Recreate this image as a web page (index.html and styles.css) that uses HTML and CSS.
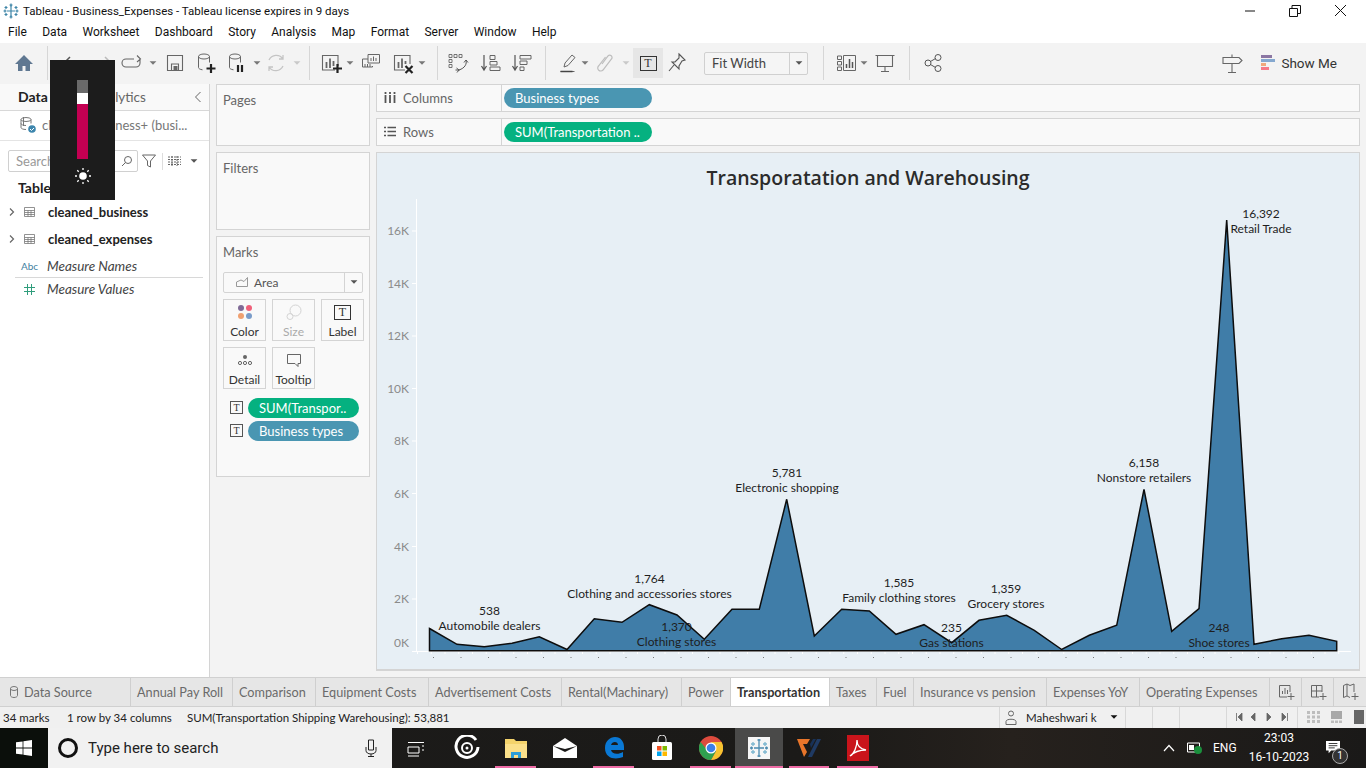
FILE: index.html
```html
<!DOCTYPE html>
<html lang="en">
<head>
<meta charset="utf-8">
<title>Tableau - Business_Expenses</title>
<link rel="stylesheet" href="styles.css">
</head>
<body>
<div class="app">
  <header class="titlebar">
    <svg class="applogo" width="16" height="16" viewBox="0 0 16 16"><g stroke="#3f86a8" stroke-width="1.2"><path d="M8 2v12M4 8h8"/><path d="M8 .5v3M6.500 2h3M8 12.500v3M6.500 14h3M.5 8h3M2 6.500v3M12.500 8h3M14 6.500v3M3 3v3M1.500 4.500h3M13 3v3M11.500 4.500h3M3 10v3M1.500 11.500h3M13 10v3M11.500 11.500h3"/></g></svg>
    <span class="apptitle">Tableau - Business_Expenses - Tableau license expires in 9 days</span>
    <div class="winctl">
      <svg width="12" height="12" viewBox="0 0 12 12"><path d="M1 6h10" stroke="#111" fill="none"/></svg>
      <svg width="12" height="12" viewBox="0 0 12 12"><path d="M.5 3.500h8v8h-8zM3 3.500V.5h8.500v8H8.500" stroke="#111" fill="none"/></svg>
      <svg width="13" height="13" viewBox="0 0 13 13"><path d="M1 1l11 11M12 1L1 12" stroke="#111" fill="none"/></svg>
    </div>
  </header>
  <nav class="menubar">
    <span>File</span><span>Data</span><span>Worksheet</span><span>Dashboard</span><span>Story</span><span>Analysis</span><span>Map</span><span>Format</span><span>Server</span><span>Window</span><span>Help</span>
  </nav>
  <div class="toolbar">
    <svg class="ic ml12" viewBox="0 0 24 24"><path d="M12 4L3 13h3v7h4.500v-5h3v5H18v-7h3z" fill="#5f7791"/></svg>
    <i class="sep ml11"></i>
    <svg class="ic ml11" viewBox="0 0 24 24"><path d="M21 12H5M11 6l-6 6 6 6" fill="none" stroke="#555" stroke-width="1.500"/></svg>
    <svg class="ic ml9" viewBox="0 0 24 24"><path d="M3 12h16M13 6l6 6-6 6" fill="none" stroke="#bbb" stroke-width="1.500"/></svg>
    <svg class="ic ml4" viewBox="0 0 24 24"><path d="M14 8H6a4 4 0 0 0 0 8h10a4 4 0 0 0 4-4V9M17 4.500l3.500 3.500-3.500 3" fill="none" stroke="#666" stroke-width="1.100"/></svg>
    <i class="caret ml5"></i>
    <svg class="ic ml6" viewBox="0 0 24 24"><path d="M4.500 4.500h15v15h-15zM8.500 19v-6h7v6" fill="none" stroke="#666" stroke-width="1.100"/><path d="M10.500 15h4v4h-4z" fill="#666"/></svg>
    <svg class="ic ml7" viewBox="0 0 24 24"><ellipse cx="10" cy="5.500" rx="5.500" ry="2.500" fill="none" stroke="#666"/><path d="M4.500 5.500v11c0 1 1.500 2 4 2.300M15.500 5.500v6" fill="none" stroke="#666"/><path d="M17 13v9M12.500 17.500h9" stroke="#222" stroke-width="2.200"/></svg>
    <svg class="ic ml7" viewBox="0 0 24 24"><ellipse cx="10" cy="5.500" rx="5.500" ry="2.500" fill="none" stroke="#666"/><path d="M4.500 5.500v11c0 1 1.500 2 4 2.300M15.500 5.500v6" fill="none" stroke="#666"/><path d="M13 14v7M17 14v7" stroke="#222" stroke-width="2.200"/></svg>
    <i class="caret ml4"></i>
    <svg class="ic ml3" viewBox="0 0 24 24"><path d="M5 9a8 8 0 0 1 14-1M19 15a8 8 0 0 1-14 1M19 4v4h-4M5 20v-4h4" fill="none" stroke="#c4c4c4" stroke-width="1.300"/></svg>
    <i class="caret off ml5"></i>
    <i class="sep ml8"></i>
    <svg class="ic ml9" viewBox="0 0 24 24"><path d="M16 19H3.500V4.500H19V15" fill="none" stroke="#666" stroke-width="1.100"/><path d="M7.500 11v6M11 7.500V17M14.500 10v5" stroke="#666" stroke-width="1.800"/><path d="M18.500 13v9M14 17.500h9" stroke="#222" stroke-width="2.200"/></svg>
    <i class="caret ml3"></i>
    <svg class="ic ml5" viewBox="0 0 24 24"><path d="M9 8H3.500v8h10v-1M9 3.500h11.500V12H9zM12 10V7M14.500 10V5.500M17 10V7M6 16v-3M8.500 16v-3M11 16v-3" fill="none" stroke="#666"/></svg>
    <svg class="ic ml8" viewBox="0 0 24 24"><path d="M14 19H3.500V4.500H19V13" fill="none" stroke="#666" stroke-width="1.100"/><path d="M7.500 11v6M11 7.500V17M14.500 10v3" stroke="#666" stroke-width="1.800"/><path d="M14.500 15l7 7M21.500 15l-7 7" stroke="#222" stroke-width="2.200"/></svg>
    <i class="caret ml3"></i>
    <i class="sep ml11"></i>
    <svg class="ic ml8" viewBox="0 0 24 24"><path d="M3 3.500h3v3H3zM8 3.500h3v3H8zM13 3.500h3v3h-3zM3 8.500h3v3H3zM3 13.500h3v3H3z" fill="none" stroke="#666" stroke-width=".9"/><path d="M20 9c1 4-1 8-7 10M9.500 19h4M20 9l-2 2.500M20 9l2 2.500M13 19l-2.500-2M13 19l-2 2.500" fill="none" stroke="#555"/></svg>
    <svg class="ic ml9" viewBox="0 0 24 24"><path d="M5 4v14M2.500 15L5 19l2.500-4" fill="none" stroke="#555" stroke-width="1.200"/><path d="M11 4.500h5v4h-5zM11 10.500h7v3.500h-7zM11 16h10v3.500H11z" fill="none" stroke="#666"/></svg>
    <svg class="ic ml7" viewBox="0 0 24 24"><path d="M5 4v14M2.500 15L5 19l2.500-4" fill="none" stroke="#555" stroke-width="1.200"/><path d="M10 4.500h11v3.500H10zM10 10h7v3.500h-7zM10 16h4v3.500h-4z" fill="none" stroke="#666"/></svg>
    <i class="sep ml11"></i>
    <svg class="ic ml10" viewBox="0 0 24 24"><path d="M8 16l1-4 7-8 3 2.500-7 8zM4.500 20.500h14" fill="none" stroke="#666"/><path d="M4.500 20.500h12" stroke="#444" stroke-width="1.500"/></svg>
    <i class="caret ml1"></i>
    <svg class="ic ml4" viewBox="0 0 24 24"><path d="M9 13l6-8a2.300 2.300 0 0 1 3.500 3L10 19a3 3 0 0 1-4.500-4l7-9" fill="none" stroke="#bdbdbd" stroke-width="1.200"/></svg>
    <i class="caret off ml5"></i>
    <span class="tbtn ml3"><span class="tbox big">T</span></span>
    <svg class="ic ml2" viewBox="0 0 24 24"><path d="M14 3l6 6-3 1-3 5 0 3-7-7 3 0 4-4zM9 14l-5 6" fill="none" stroke="#555" stroke-width="1.100"/></svg>
    <div class="fit"><span class="fit-text">Fit Width</span><span class="fit-arrow"><i class="caret dk"></i></span></div>
    <i class="sep ml15"></i>
    <svg class="ic ml11" viewBox="0 0 24 24"><path d="M2.500 5h4v3.500h-4zM2.500 10.500h4V14h-4zM2.500 16h4v3.500h-4zM8.500 4.500h12v15h-12z" fill="none" stroke="#666"/><path d="M11.500 17v-4M14.500 17V8M17.500 17v-6" stroke="#555" stroke-width="1.500"/></svg>
    <i class="caret ml1"></i>
    <svg class="ic ml5" viewBox="0 0 24 24"><path d="M2.500 4.500h19M4.500 4.500v11h15v-11M12 15.500v5M8 20.500h8" fill="none" stroke="#666" stroke-width="1.100"/></svg>
    <i class="sep ml12"></i>
    <svg class="ic ml11" viewBox="0 0 24 24"><circle cx="7" cy="12" r="3" fill="none" stroke="#555"/><circle cx="17" cy="6.500" r="3" fill="none" stroke="#555"/><circle cx="17" cy="17.500" r="3" fill="none" stroke="#555"/><path d="M9.500 10.500l5-3M9.500 13.500l5 3" stroke="#555"/></svg>
    <div class="tb-right">
      <svg class="ic" viewBox="0 0 24 24"><path d="M3 6.500h16l3 3-3 3H3zM12 3.500v3M12 12.500v9M8 21.500h8" fill="none" stroke="#666" stroke-width="1.100"/></svg>
      <div class="showme">
        <svg width="14" height="16" viewBox="0 0 14 16"><path d="M0 0h11v3H0z" fill="#8b76a3"/><path d="M0 4h14v3H0z" fill="#85a8cf"/><path d="M0 8h5v3H0z" fill="#f0a97c"/><path d="M0 12h8v3H0z" fill="#f67a88"/></svg>
        <span>Show Me</span>
      </div>
    </div>
  </div>

  <div class="main">
    <aside class="datapane">
      <div class="dp-head"><span class="dp-data">Data</span><span class="dp-an">Analytics</span><svg class="dp-chev" width="8" height="12" viewBox="0 0 8 12"><path d="M6.500 1L1.500 6l5 5" fill="none" stroke="#666"/></svg></div>
      <div class="dp-source">
        <svg width="18" height="18" viewBox="0 0 18 18"><ellipse cx="7" cy="3.500" rx="5" ry="2" fill="none" stroke="#777"/><path d="M2 3.500v8c0 1 2 2 5 2M12 3.500v4M2 7.500c0 1 2 2 5 2M4.500 1v9" fill="none" stroke="#777"/><circle cx="13" cy="13" r="3.800" fill="#3d86ad"/><path d="M11 13l1.500 1.500 2.500-2.500" stroke="#fff" fill="none"/></svg>
        <span>cleaned_business+ (busi...</span>
      </div>
      <div class="dp-search">
        <div class="searchbox"><span>Search</span><svg width="12" height="12" viewBox="0 0 12 12"><circle cx="7" cy="5" r="3.500" fill="none" stroke="#666"/><path d="M4.500 7.500L1 11" stroke="#666"/></svg></div>
        <svg class="dp-funnel" width="14" height="14" viewBox="0 0 14 14"><path d="M.5 1h13L8.500 7v6l-3-1.500V7z" fill="none" stroke="#666"/></svg>
        <i class="vline"></i>
        <svg width="13" height="10" viewBox="0 0 13 10"><path d="M0 1h13M0 3.500h13M0 6h13M0 8.500h13M4 0v10M9 0v10" stroke="#666" fill="none" stroke-dasharray="2 1"/></svg>
        <i class="caret dk ml9"></i>
      </div>
      <div class="dp-tables">Tables</div>
      <div class="field tbl"><svg class="chev" width="6" height="8" viewBox="0 0 6 8"><path d="M1 .5L4.500 4 1 7.500" fill="none" stroke="#666" stroke-width="1.200"/></svg><svg width="11" height="10" viewBox="0 0 11 10"><path d="M.5.500h10v9H.5zM.5 3.500h10M.5 5.500h10M.5 7.500h10M4 3.500v6M7 3.500v6" fill="none" stroke="#777" stroke-width=".8"/></svg><b>cleaned_business</b></div>
      <div class="field tbl gap2"><svg class="chev" width="6" height="8" viewBox="0 0 6 8"><path d="M1 .5L4.500 4 1 7.500" fill="none" stroke="#666" stroke-width="1.200"/></svg><svg width="11" height="10" viewBox="0 0 11 10"><path d="M.5.500h10v9H.5zM.5 3.500h10M.5 5.500h10M.5 7.500h10M4 3.500v6M7 3.500v6" fill="none" stroke="#777" stroke-width=".8"/></svg><b>cleaned_expenses</b></div>
      <div class="field mn"><span class="abc">Abc</span><em>Measure Names</em></div>
      <div class="field mv"><svg width="11" height="11" viewBox="0 0 11 11"><path d="M3.500 0v11M7.500 0v11M0 3.500h11M0 7.500h11" stroke="#2f9d7c" fill="none"/></svg><em>Measure Values</em></div>
    </aside>

    <section class="cards">
      <div class="card pages"><h3>Pages</h3></div>
      <div class="card filters"><h3>Filters</h3></div>
      <div class="card marks">
        <h3>Marks</h3>
        <div class="markselect"><svg width="12" height="10" viewBox="0 0 12 10"><path d="M.5 9.500V5L5 3l3 1.500 3.500-4v9z" fill="none" stroke="#999"/></svg><span>Area</span><span class="ms-arrow"><i class="caret dk"></i></span></div>
        <div class="markgrid">
          <div class="mbtn"><svg width="16" height="16" viewBox="0 0 16 16"><circle cx="4" cy="4" r="3" fill="#7f6a96"/><circle cx="12" cy="4" r="3" fill="#f0607a"/><circle cx="4" cy="12" r="3" fill="#f0a070"/><circle cx="12" cy="12" r="3" fill="#7a9cc9"/></svg><span>Color</span></div>
          <div class="mbtn off"><svg width="16" height="16" viewBox="0 0 16 16"><circle cx="9.500" cy="6.500" r="5.500" fill="none" stroke="#d3d3d3"/><circle cx="4" cy="12.500" r="3" fill="none" stroke="#d3d3d3"/></svg><span>Size</span></div>
          <div class="mbtn"><span class="tbox big">T</span><span>Label</span></div>
          <div class="mbtn"><svg width="16" height="16" viewBox="0 0 16 16"><circle cx="8" cy="5" r="2" fill="#666"/><circle cx="3" cy="11" r="1.600" fill="none" stroke="#666"/><circle cx="8" cy="11" r="1.600" fill="none" stroke="#666"/><circle cx="13" cy="11" r="1.600" fill="none" stroke="#666"/></svg><span>Detail</span></div>
          <div class="mbtn"><svg width="16" height="16" viewBox="0 0 16 16"><path d="M1.500 2.500h13v9h-2.500v3l-3-3h-7.500z" fill="none" stroke="#666"/></svg><span>Tooltip</span></div>
        </div>
        <div class="markpill"><span class="tbox">T</span><span class="pill green">SUM(Transpor..</span></div>
        <div class="markpill"><span class="tbox">T</span><span class="pill blue">Business types</span></div>
      </div>
    </section>

    <section class="sheet">
      <div class="shelf">
        <div class="shelf-label"><svg width="12" height="11" viewBox="0 0 12 11"><path d="M1.500 3v8M6 3v8M10.500 3v8M1.500 0v2M6 0v2M10.500 0v2" stroke="#555" stroke-width="1.800"/></svg><span>Columns</span></div>
        <div class="shelf-body"><span class="pill blue wide">Business types</span></div>
      </div>
      <div class="shelf">
        <div class="shelf-label"><svg width="12" height="11" viewBox="0 0 12 11"><path d="M0 1.500h2M3.500 1.500H12M0 5.500h2M3.500 5.500H12M0 9.500h2M3.500 9.500H12" stroke="#555" stroke-width="1.600"/></svg><span>Rows</span></div>
        <div class="shelf-body"><span class="pill green wide">SUM(Transportation ..</span></div>
      </div>
      <div class="view">
        <h1 class="viewtitle">Transporatation and Warehousing</h1>
        <svg class="chart" viewBox="377 198 982 472" width="982" height="472">
          <g class="axis">
            <path d="M416.500 199V651M412 231h4M412 283.500h4M412 336h4M412 388.500h4M412 441h4M412 493.500h4M412 546.500h4M412 599h4M412 651.500h939"/>
            <path class="minor" d="M417 652.500H1351"/>
            <path class="dots" d="M433 657.500H1340"/>
          </g>
          <g class="ylabels">
            <text x="409" y="235">16K</text><text x="409" y="288">14K</text><text x="409" y="340">12K</text><text x="409" y="393">10K</text><text x="409" y="445">8K</text><text x="409" y="498">6K</text><text x="409" y="551">4K</text><text x="409" y="603">2K</text><text x="409" y="647">0K</text>
          </g>
          <path class="area" d="M429.500 628.500L457 644.300 484.300 646.700 512 643.300 539.300 636.700 567 649.500 594.300 618.700 622 622.300 649.300 604.700 677 615 704.300 639.300 732 609.300 759.300 609.300 786.700 499.300 814.300 636 841.700 609.300 869.300 611 896 634.300 924 624.700 951.700 642.700 979 620.300 1006.700 615.300 1034.300 630.300 1061.700 649.500 1089.300 635.300 1116.700 625.300 1144 489.300 1171.700 631.300 1199 608.700 1226.700 220 1254 644.300 1281.700 638.700 1309 635.300 1336.700 641.300V650.700H429.500Z"/>
          <g class="labels">
            <text x="489.500" y="615">538</text><text x="489.500" y="630">Automobile dealers</text>
            <text x="649.500" y="583">1,764</text><text x="649.500" y="598">Clothing and accessories stores</text>
            <text x="676.500" y="631">1,370</text><text x="676.500" y="646">Clothing stores</text>
            <text x="787" y="477">5,781</text><text x="787" y="492">Electronic shopping</text>
            <text x="899" y="587">1,585</text><text x="899" y="602">Family clothing stores</text>
            <text x="951.500" y="632">235</text><text x="951.500" y="647">Gas stations</text>
            <text x="1006" y="593">1,359</text><text x="1006" y="608">Grocery stores</text>
            <text x="1144" y="467">6,158</text><text x="1144" y="482">Nonstore retailers</text>
            <text x="1219" y="632">248</text><text x="1219" y="647">Shoe stores</text>
            <text x="1261" y="218">16,392</text><text x="1261" y="233">Retail Trade</text>
          </g>
        </svg>
      </div>
    </section>
  </div>

  <div class="tabs">
    <div class="tab t-ds"><svg width="8" height="12" viewBox="0 0 8 12"><ellipse cx="4" cy="2.500" rx="3.500" ry="2" fill="none" stroke="#777"/><path d="M.5 2.500v7c0 1 1.500 2 3.500 2s3.500-1 3.500-2v-7" fill="none" stroke="#777"/></svg>Data Source</div>
    <div class="tab t-a">Annual Pay Roll</div>
    <div class="tab t-b">Comparison</div>
    <div class="tab t-c">Equipment Costs</div>
    <div class="tab t-d">Advertisement Costs</div>
    <div class="tab t-e">Rental(Machinary)</div>
    <div class="tab t-f">Power</div>
    <div class="tab t-g active">Transportation</div>
    <div class="tab t-h">Taxes</div>
    <div class="tab t-i">Fuel</div>
    <div class="tab t-j">Insurance vs pension</div>
    <div class="tab t-k">Expenses YoY</div>
    <div class="tab t-l">Operating Expenses</div>
    <div class="tab t-add"><svg width="18" height="18" viewBox="0 0 18 18"><path d="M10 14H2.500V2.500H13V9M5.500 11V8M8 11V5M10.500 11V7M14 10v7M10.500 13.500h7" fill="none" stroke="#666"/></svg></div>
    <div class="tab t-add"><svg width="18" height="18" viewBox="0 0 18 18"><path d="M10 14H2.500V2.500H13V9M2.500 8H13M7.500 2.500V14M14 10v7M10.500 13.500h7" fill="none" stroke="#666"/></svg></div>
    <div class="tab t-add last"><svg width="18" height="18" viewBox="0 0 18 18"><path d="M9 14.500l-3-1.500-3.500 1.500v-12L6 1l3 1.500 4-1.500v8M6 1v12M14 10v7M10.500 13.500h7" fill="none" stroke="#666"/></svg></div>
  </div>
  <div class="status">
    <span class="st-a">34 marks</span><span class="st-b">1 row by 34 columns</span><span class="st-c">SUM(Transportation Shipping Warehousing): 53,881</span>
    <div class="st-user"><svg width="12" height="15" viewBox="0 0 12 15"><circle cx="6" cy="3.500" r="2.500" fill="none" stroke="#666"/><path d="M1 14.500v-3c0-3 10-3 10 0v3z" fill="none" stroke="#666"/></svg><span>Maheshwari k</span><i class="caret blk"></i></div>
    <div class="st-cell"></div><div class="st-cell"></div>
    <div class="st-cell w47"></div>
    <div class="st-nav">
      <svg width="60" height="10" viewBox="0 0 60 10"><path d="M1.500 1v8M7 1L3 5l4 4zM20 1l-4 4 4 4zM32 1l4 4-4 4zM47 1l4 4-4 4zM52.500 1v8" fill="#666" stroke="#666" stroke-width=".8"/></svg>
    </div>
    <div class="st-views">
      <svg width="14" height="14" viewBox="0 0 14 14"><path d="M0 1h3v3H0zM5 1h3v3H5zM10 1h3v3h-3zM0 5.500h3v3H0zM5 5.500h3v3H5zM10 5.500h3v3h-3zM0 10h3v3H0zM5 10h3v3H5zM10 10h3v3h-3z" fill="#bdbdbd"/></svg>
      <svg width="14" height="14" viewBox="0 0 14 14"><path d="M1 1h11v8H1z" fill="#a8a8a8"/><path d="M1 10.500h3v2.500H1zM5 10.500h3v2.500H5zM9 10.500h3v2.500H9z" fill="#bdbdbd"/></svg>
      <svg width="12" height="14" viewBox="0 0 12 14"><path d="M1 0h10v14H1z" fill="#666"/></svg>
    </div>
  </div>
  <footer class="taskbar">
    <div class="start"><svg width="16" height="16" viewBox="0 0 16 16"><path d="M0 2.300L6.600 1.400V7.600H0zM7.400 1.300L16 0V7.600H7.400zM0 8.400H6.600V14.600L0 13.700zM7.400 8.400H16V16L7.400 14.700z" fill="#fff"/></svg></div>
    <div class="tsearch"><i class="cortana"></i><span>Type here to search</span><svg class="tmic" width="12" height="18" viewBox="0 0 12 18"><path d="M3.500 1h5v10h-5zM1 8v3.500c0 2 2 3.500 5 3.500s5-1.500 5-3.500V8M6 15v2.500M3 17.500h6" fill="none" stroke="#222"/></svg></div>
    <div class="tasks">
      <div class="task t1"><svg width="18" height="18" viewBox="0 0 18 18"><path d="M1 3.500h16M1 8h11v6H1zM1 17h11M15 7h2M15 11h2" fill="none" stroke="#fff"/></svg></div>
      <div class="task t2"><svg width="26" height="26" viewBox="0 0 26 26"><path d="M22 5a11 11 0 1 0 2 7" fill="none" stroke="#fff" stroke-width="3"/><circle cx="13" cy="13" r="5" fill="none" stroke="#fff" stroke-width="2"/><circle cx="13" cy="13" r="1.500" fill="#fff"/></svg></div>
      <div class="task t3 mark"><svg width="24" height="22" viewBox="0 0 24 22"><path d="M1 2h9l2 2h11v17H1z" fill="#f4d36b"/><path d="M1 7h22v14H1z" fill="#fbe08a"/><path d="M7 21v-6h10v6h-3v-3h-4v3z" fill="#2d9fd9"/></svg></div>
      <div class="task t4"><svg width="24" height="20" viewBox="0 0 24 20"><path d="M0 8L12 0l12 8v12H0z" fill="#fff"/><path d="M0 8l12 6 12-6-12 3z" fill="#1b1a19"/></svg></div>
      <div class="task t5 mark"><svg width="22" height="24" viewBox="0 0 22 24"><path d="M2 12C2 5 7 1 12 1c6 0 9 5 9 10v3H8c.5 4 7 5 12 2v5c-7 3-18 2-18-9zM8 9h7c0-4-6-4-7 0z" fill="#0a78d4"/></svg></div>
      <div class="task t6"><svg width="22" height="26" viewBox="0 0 22 26"><path d="M7 8V4a4 4 0 0 1 8 0v4" fill="none" stroke="#ddd"/><rect x="1" y="7" width="20" height="18" rx="1.500" fill="#fff"/><path d="M6 11h4.500v4.500H6z" fill="#f25022"/><path d="M11.500 11H16v4.500h-4.500z" fill="#7fba00"/><path d="M6 16.500h4.500V21H6z" fill="#00a4ef"/><path d="M11.500 16.500H16V21h-4.500z" fill="#ffb900"/></svg></div>
      <div class="task t7 mark"><svg width="24" height="24" viewBox="0 0 24 24"><circle cx="12" cy="12" r="12" fill="#dd4b3e"/><path d="M12 6h10.500A12 12 0 0 1 12 24l5-9z" fill="#f6c230"/><path d="M1.600 6A12 12 0 0 0 12 24l5-9-5 0-5.500-3z" fill="#2fa04f"/><circle cx="12" cy="12" r="5.500" fill="#fff"/><circle cx="12" cy="12" r="4.300" fill="#3c7fe8"/></svg></div>
      <div class="task t8 mark sel"><span class="tabapp"><svg width="20" height="20" viewBox="0 0 20 20"><g stroke="#4b8bb0" stroke-width="1.300"><path d="M10 3v14M5 10h10M10 1v3M8.500 2h3M10 16v3M8.500 18h3M1 10h3M2.500 8.500v3M16 10h3M17.500 8.500v3"/><path d="M4 4v4M2 6h4M16 4v4M14 6h4M4 12v4M2 14h4M16 12v4M14 14h4" stroke="#7cb6cf"/></g></svg></span></div>
      <div class="task t9 mark"><svg width="24" height="22" viewBox="0 0 24 22"><path d="M0 2h13l-3 5H6l4 8-3 5z" fill="#e8752a"/><path d="M11 20L20 2h4l-9 18z" fill="#1f3a63"/><path d="M13 7l3-5h3l-5 9z" fill="#183157"/></svg></div>
      <div class="task t10 mark"><svg width="22" height="26" viewBox="0 0 22 26"><rect width="22" height="26" fill="#c9141b"/><path d="M3 21c4-2 7-9 7-16 0 5 3 9 9 10-6 0-11 1-16 6z" fill="none" stroke="#fff" stroke-width="1.300"/></svg></div>
    </div>
    <div class="tray">
      <svg class="tr-up" width="12" height="8" viewBox="0 0 12 8"><path d="M1 7l5-5.500L11 7" fill="none" stroke="#fff" stroke-width="1.200"/></svg>
      <svg class="tr-bat" width="16" height="14" viewBox="0 0 16 14"><path d="M.5 2h12v9H.5z" fill="none" stroke="#fff"/><path d="M2 4h5v5H2z" fill="#fff"/><circle cx="11" cy="9" r="4" fill="#1a8f3c"/></svg>
      <span class="tr-lang">ENG</span>
      <div class="tr-clock"><span>23:03</span><span>16-10-2023</span></div>
      <div class="tr-note"><svg width="16" height="14" viewBox="0 0 18 16"><path d="M1 1h16v11H7l-3 3v-3H1z" fill="#fff"/><path d="M4 4h10M4 6.500h10M4 9h7" stroke="#222"/></svg><span class="badge">1</span></div>
    </div>
  </footer>

  <div class="osd">
    <div class="osd-bar"><i class="o1"></i><i class="o2"></i><i class="o3"></i></div>
    <svg width="16" height="16" viewBox="0 0 16 16"><circle cx="8" cy="8" r="3.800" fill="#fff"/><path d="M8 0v2M8 14v2M0 8h2M14 8h2M2.300 2.300l1.400 1.400M12.300 12.300l1.400 1.400M2.300 13.700l1.400-1.400M12.300 3.700l1.400-1.400" stroke="#fff" stroke-width="1.300"/></svg>
  </div>
</div>
</body>
</html>
```

FILE: styles.css
```css
* { box-sizing: border-box; }
html, body { margin: 0; padding: 0; }
body { width: 1366px; height: 768px; overflow: hidden; font-family: "Lato", "Open Sans", sans-serif; font-size: 13px; color: #333; background: #fff; }
.app { position: relative; width: 1366px; height: 768px; display: flex; flex-direction: column; }
h1, h3 { margin: 0; font-weight: normal; }
i { display: block; font-style: normal; }
svg { display: block; flex: none; }

.titlebar { height: 22px; display: flex; align-items: center; padding-left: 3px; font-family: "Roboto", sans-serif; font-size: 11.500px; color: #111; }
.applogo { margin-right: 4px; }
.winctl { margin-left: auto; display: flex; align-items: center; gap: 33px; padding-right: 19px; }

.menubar { height: 21px; display: flex; align-items: center; padding-left: 8px; gap: 15.400px; font-family: "Roboto", sans-serif; font-size: 12px; color: #111; }

.toolbar { height: 41px; background: #f3f3f3; display: flex; align-items: center; }
.ic { width: 24px; height: 24px; flex: none; }
.sep { width: 1px; height: 34px; background: #d6d6d6; flex: none; }
.caret { width: 0; height: 0; border-left: 4px solid transparent; border-right: 4px solid transparent; border-top: 4px solid #777; transform: scale(.85); flex: none; }
.caret.off { border-top-color: #c9c9c9; }
.caret.dk { border-top-color: #555; }
.caret.blk { border-top-color: #111; }
.ml1 { margin-left: 1px; } .ml2 { margin-left: 2px; } .ml3 { margin-left: 3px; } .ml4 { margin-left: 4px; }
.ml5 { margin-left: 5px; } .ml6 { margin-left: 6px; } .ml7 { margin-left: 7px; } .ml8 { margin-left: 8px; }
.ml9 { margin-left: 9px; } .ml10 { margin-left: 10px; } .ml11 { margin-left: 11px; } .ml12 { margin-left: 12px; } .ml15 { margin-left: 15px; }
.tbtn { width: 30px; height: 30px; background: #e6e6e6; display: flex; align-items: center; justify-content: center; flex: none; }
.tbox { width: 13px; height: 13px; border: 1px solid #555; font-family: "Liberation Serif", serif; font-size: 10px; line-height: 11px; text-align: center; color: #333; display: block; flex: none; }
.tbox.big { width: 17px; height: 15px; font-size: 12px; line-height: 13px; border-color: #333; }
.fit { margin-left: 15px; width: 104px; height: 23px; border: 1px solid #d0d0d0; border-radius: 2px; display: flex; align-items: center; background: #f5f5f5; font-size: 13px; color: #444; flex: none; }
.fit-text { flex: 1; padding-left: 7px; }
.fit-arrow { width: 18px; height: 21px; border-left: 1px solid #d0d0d0; display: flex; align-items: center; justify-content: center; }
.tb-right { margin-left: auto; display: flex; align-items: center; padding-right: 29px; gap: 17px; }
.showme { display: flex; align-items: center; gap: 6px; font-family: "Roboto", sans-serif; font-size: 13.500px; color: #333; }

.main { height: 594px; background: #f3f3f3; display: flex; }
.datapane { width: 210px; flex: none; background: #fff; border-right: 1px solid #d4d4d4; display: flex; flex-direction: column; }
.dp-head { height: 27px; border-bottom: 1px solid #d8d8d8; display: flex; align-items: center; padding-left: 18px; background: #f9f9f9; position: relative; }
.dp-data { font-weight: 700; font-size: 14px; color: #222; }
.dp-an { margin-left: 44px; font-size: 13.500px; color: #666; }
.dp-chev { margin-left: auto; margin-right: 7px; }
.dp-source { height: 30px; border-bottom: 1px solid #e4e4e4; display: flex; align-items: center; padding-left: 19px; gap: 5px; color: #777; font-size: 13px; }
.dp-search { display: flex; align-items: center; margin-top: 10px; padding-left: 8px; height: 21px; }
.searchbox { width: 130px; height: 22px; border: 1px solid #d0d0d0; border-radius: 2px; display: flex; align-items: center; justify-content: space-between; padding: 0 4px 0 7px; color: #999; font-size: 13px; }
.dp-funnel { margin-left: 4px; }
.vline { width: 1px; height: 17px; background: #ddd; margin: 0 5px 0 6px; }
.dp-tables { margin: 6px 0 0 18px; font-weight: 700; font-size: 14px; color: #222; height: 20px; line-height: 20px; }
.field { display: flex; align-items: center; height: 22px; }
.field.tbl { margin-top: 3px; padding-left: 9px; }
.field.tbl.gap2 { margin-top: 5px; }
.field .chev { margin-right: 9px; }
.field b { margin-left: 13px; font-size: 13px; color: #222; }
.field em { font-size: 13.500px; color: #444; }
.field.mn { margin: 6px 6px 0 15px; height: 22px; border-bottom: 1px solid #d8d8d8; }
.abc { font-size: 10px; color: #3f7f9f; width: 32px; padding-left: 6px; }
.field.mv { margin-left: 15px; height: 23px; }
.field.mv svg { margin: 0 12px 0 9px; }

.cards { width: 154px; flex: none; margin-left: 6px; display: flex; flex-direction: column; gap: 6px; }
.card { background: #f9f9f9; border: 1px solid #d4d4d4; padding: 0 6px; }
.card h3 { font-size: 13px; color: #666; margin-top: 7px; line-height: 16px; }
.pages { height: 62px; }
.filters { height: 78px; }
.marks { height: 241px; }
.markselect { margin-top: 12px; height: 21px; border: 1px solid #d4d4d4; border-radius: 2px; display: flex; align-items: center; background: #f9f9f9; padding-left: 12px; gap: 6px; font-size: 12px; color: #555; position: relative; }
.ms-arrow { margin-left: auto; width: 18px; height: 19px; border-left: 1px solid #d4d4d4; display: flex; align-items: center; justify-content: center; }
.markgrid { display: grid; grid-template-columns: 43px 43px 43px; column-gap: 6px; row-gap: 6px; margin-top: 6px; }
.mbtn { height: 42px; border: 1px solid #d4d4d4; display: flex; flex-direction: column; align-items: center; justify-content: flex-end; font-size: 12px; color: #333; padding-bottom: 1px; gap: 4px; }
.mbtn.off { color: #aaa; }
.markpill { display: flex; align-items: center; height: 20px; margin-left: 7px; margin-top: 3px; gap: 5px; }
.markgrid + .markpill { margin-top: 9px; }
.pill { display: block; width: 111px; height: 20px; border-radius: 10px; color: #fff; font-size: 13px; line-height: 20px; padding-left: 11px; white-space: nowrap; overflow: hidden; }
.pill.blue { background: #4a96b2; }
.pill.green { background: #05b180; }
.pill.wide { width: 148px; }

.sheet { flex: 1; min-width: 0; margin-left: 6px; margin-right: 6px; display: flex; flex-direction: column; gap: 6px; }
.shelf { height: 28px; background: #f9f9f9; border: 1px solid #d4d4d4; display: flex; }
.shelf-label { width: 125px; border-right: 1px solid #d4d4d4; display: flex; align-items: center; gap: 7px; padding-left: 7px; color: #666; font-size: 13px; }
.shelf-body { flex: 1; display: flex; align-items: center; padding-left: 2px; }
.view { height: 519px; background: #e7eff5; border: 1px solid #d4d4d4; border-bottom-width: 2px; }
.viewtitle { height: 45px; padding-top: 10px; text-align: center; font-family: "Open Sans", sans-serif; font-size: 19.500px; line-height: 30px; font-weight: 600; color: #2b2b2b; }
.chart { width: 982px; height: 472px; }
.axis path { fill: none; stroke: #fff; stroke-width: 1; }
.axis .minor { stroke-width: 3; stroke-dasharray: 1 12.750; }
.axis .dots { stroke: #777; stroke-width: 1; stroke-dasharray: 1 26.500; }
.ylabels text { text-anchor: end; font-size: 12px; fill: #8b8b8b; }
.area { fill: #407da8; stroke: #0d0d0d; stroke-width: 1.500; stroke-linejoin: miter; }
.labels text { text-anchor: middle; font-size: 12px; fill: #1e1e1e; }

.tabs { height: 30px; background: #e6e6e6; border-top: 1px solid #d0d0d0; border-bottom: 1px solid #d0d0d0; display: flex; }
.tab { flex: none; border-right: 1px solid #cfcfcf; color: #6a6a6a; font-size: 12.700px; display: flex; align-items: center; padding-left: 6px; gap: 6px; white-space: nowrap; }
.tab.active { background: #fff; color: #333; font-weight: 700; }
.tab.t-ds { padding-left: 10px; }
.t-ds { width: 131px; } .t-a { width: 102px; } .t-b { width: 83px; } .t-c { width: 113px; } .t-d { width: 133px; } .t-e { width: 120px; }
.t-f { width: 49px; } .t-g { width: 99px; } .t-h { width: 47px; } .t-i { width: 37px; } .t-j { width: 133px; } .t-k { width: 93px; } .t-l { width: 130px; }
.t-add { width: 32px; padding-left: 7px; }
.t-add.last { border-right: 0; }

.status { height: 21px; background: #f0f0f0; display: flex; align-items: center; font-size: 11.500px; color: #222; }
.st-a { margin-left: 3px; width: 64px; }
.st-b { width: 120px; }
.st-c { width: 812px; }
.st-user { width: 127px; height: 21px; border-left: 1px solid #d8d8d8; border-right: 1px solid #d8d8d8; display: flex; align-items: center; padding-left: 5px; gap: 9px; font-size: 11.500px; }
.st-user .caret { margin-left: 3px; }
.st-user span { width: 72px; white-space: nowrap; }
.st-cell { width: 27px; height: 21px; border-right: 1px solid #d8d8d8; }
.st-cell.w47 { width: 47px; }
.st-nav { width: 71px; height: 21px; border-right: 1px solid #d8d8d8; display: flex; align-items: center; padding-left: 8px; }
.st-views { display: flex; align-items: center; gap: 9px; padding-left: 9px; }

.taskbar { height: 40px; background: linear-gradient(90deg, #1c1b1a 0%, #1b1a18 60%, #26211d 74%, #1a1918 100%); display: flex; align-items: stretch; color: #fff; }
.start { width: 48px; background: #0b0f0b; display: flex; align-items: center; justify-content: center; }
.tsearch { width: 344px; background: #f1f1f1; display: flex; align-items: center; padding-left: 10px; color: #222; font-family: "Roboto", sans-serif; font-size: 15px; }
.cortana { width: 20px; height: 20px; border-radius: 50%; border: 3px solid #111; margin-right: 10px; }
.tmic { margin-left: auto; margin-right: 15px; }
.tasks { display: flex; align-items: stretch; }
.task { height: 40px; display: flex; align-items: center; justify-content: center; flex: none; }
.task.mark { position: relative; }
.task.mark::after { content: ""; position: absolute; left: 4px; right: 4px; bottom: 0; height: 2px; background: #ee6ba5; }
.task.sel::after { left: 0; right: 0; }
.t1 { width: 32px; margin-left: 8px; }
.t2 { width: 48px; margin-left: 11px; }
.t3 { width: 49px; }
.t4 { width: 49px; }
.t5 { width: 49px; }
.t6 { width: 48px; }
.t7 { width: 49px; }
.t8 { width: 48px; background: #4a4a49; }
.t9 { width: 48px; margin-left: 2px; }
.t10 { width: 49px; }
.tabapp { width: 22px; height: 22px; background: #f6f6f6; display: flex; align-items: center; justify-content: center; }
.tray { margin-left: auto; display: flex; align-items: center; font-family: "Roboto", sans-serif; font-size: 12px; }
.tr-up { margin-right: 12px; }
.tr-bat { margin-right: 10px; }
.tr-lang { width: 31px; }
.tr-clock { width: 70px; display: flex; flex-direction: column; align-items: center; gap: 5px; line-height: 14px; }
.tr-note { width: 52px; height: 40px; display: flex; align-items: flex-start; padding: 12px 0 0 11px; position: relative; }
.badge { position: absolute; left: 18px; top: 20px; width: 16px; height: 16px; border-radius: 50%; background: #333; border: 1px solid #aaa; font-size: 10px; line-height: 14px; text-align: center; color: #fff; }

.osd { position: absolute; left: 50px; top: 60px; width: 65px; height: 140px; background: #1c1c1c; display: flex; flex-direction: column; align-items: center; padding-top: 20px; gap: 9px; }
.osd-bar { width: 11px; height: 79px; display: flex; flex-direction: column; }
.osd-bar .o1 { height: 13px; background: #6a6a6a; }
.osd-bar .o2 { height: 11px; background: #fff; }
.osd-bar .o3 { height: 55px; background: #c30052; }
```
